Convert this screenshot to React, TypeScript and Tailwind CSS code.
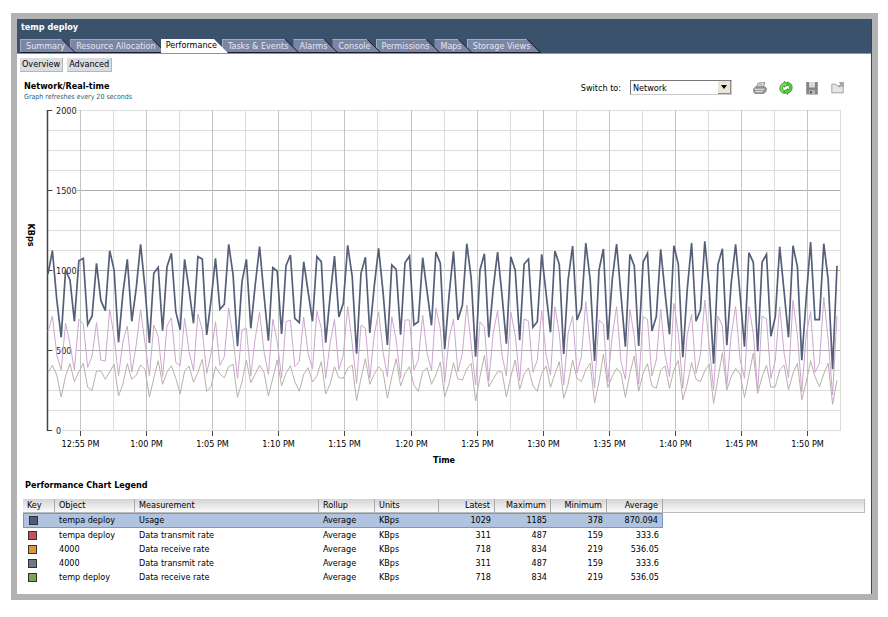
import type { ReactNode } from 'react';
import clsx from 'clsx';

const TABS = [
  'Summary',
  'Resource Allocation',
  'Performance',
  'Tasks & Events',
  'Alarms',
  'Console',
  'Permissions',
  'Maps',
  'Storage Views',
];

const TIMES = [
  '12:55 PM', '1:00 PM', '1:05 PM', '1:10 PM', '1:15 PM', '1:20 PM',
  '1:25 PM', '1:30 PM', '1:35 PM', '1:40 PM', '1:45 PM', '1:50 PM',
];

type Row = {
  color: string;
  object: string;
  measurement: string;
  values: [string, string, string, string];
};

const ROWS: Row[] = [
  { color: 'bg-[#535b7c]', object: 'tempa deploy', measurement: 'Usage', values: ['1029', '1185', '378', '870.094'] },
  { color: 'bg-[#c9505c]', object: 'tempa deploy', measurement: 'Data transmit rate', values: ['311', '487', '159', '333.6'] },
  { color: 'bg-[#d9963f]', object: '4000', measurement: 'Data receive rate', values: ['718', '834', '219', '536.05'] },
  { color: 'bg-[#717a80]', object: '4000', measurement: 'Data transmit rate', values: ['311', '487', '159', '333.6'] },
  { color: 'bg-[#78a94b]', object: 'temp deploy', measurement: 'Data receive rate', values: ['718', '834', '219', '536.05'] },
];

// One sample every 20 seconds, as depth below the 1312 KBps level (480 steps = 1000 KBps).
const USAGE = [
  162, 92, 240, 352, 150, 180, 304, 122, 115, 314, 288, 130, 242, 272, 92, 150, 367, 220, 118, 304,
  205, 73, 205, 369, 160, 142, 332, 140, 100, 275, 329, 118, 210, 310, 110, 117, 345, 240, 115, 268,
  253, 73, 165, 379, 185, 118, 325, 195, 80, 225, 362, 143, 153, 342, 137, 105, 295, 308, 125, 215,
  304, 110, 125, 368, 230, 108, 291, 250, 76, 170, 401, 160, 112, 339, 200, 85, 215, 375, 135, 148,
  344, 128, 108, 315, 305, 113, 215, 316, 96, 130, 388, 225, 94, 300, 255, 71, 175, 410, 150, 101,
  352, 205, 96, 225, 371, 110, 150, 361, 132, 117, 322, 305, 103, 220, 337, 93, 133, 402, 180, 78,
  300, 265, 69, 180, 423, 150, 87, 359, 180, 72, 225, 380, 103, 138, 378, 126, 100, 333, 290, 88,
  220, 343, 77, 133, 412, 210, 69, 304, 270, 64, 205, 431, 133, 86, 376, 190, 73, 225, 380, 98,
  127, 394, 127, 103, 349, 290, 80, 215, 352, 77, 140, 421, 235, 66, 299, 299, 71, 180, 448, 137,
];

const RECEIVE = [
  335, 288, 405, 450, 310, 372, 450, 298, 312, 442, 408, 308, 421, 423, 268, 350, 468, 365, 318, 456,
  375, 269, 370, 467, 315, 350, 470, 318, 293, 427, 437, 295, 395, 452, 282, 330, 460, 400, 305, 436,
  410, 264, 355, 475, 330, 325, 467, 355, 277, 395, 463, 298, 365, 473, 305, 300, 440, 425, 291, 400,
  447, 274, 325, 475, 370, 298, 449, 405, 260, 370, 490, 315, 325, 475, 345, 275, 395, 470, 290, 360,
  475, 300, 300, 450, 420, 286, 400, 452, 264, 325, 487, 355, 297, 455, 400, 255, 375, 495, 305, 322,
  483, 340, 272, 405, 468, 276, 345, 482, 297, 303, 457, 420, 272, 405, 465, 260, 340, 495, 340, 288,
  458, 410, 245, 375, 503, 300, 312, 487, 350, 260, 425, 478, 268, 350, 493, 290, 298, 468, 420, 267,
  405, 470, 250, 340, 505, 345, 283, 460, 405, 240, 375, 510, 288, 318, 497, 345, 260, 420, 475, 260,
  340, 515, 288, 297, 475, 420, 260, 400, 473, 241, 345, 515, 345, 275, 457, 430, 232, 360, 525, 287,
];

const TRANSMIT = [
  458, 436, 465, 531, 468, 431, 485, 455, 430, 502, 511, 453, 453, 478, 456, 432, 528, 492, 431, 478,
  466, 435, 448, 531, 475, 422, 493, 457, 437, 475, 522, 453, 438, 487, 457, 418, 514, 500, 440, 462,
  473, 440, 433, 532, 485, 421, 488, 462, 436, 457, 528, 475, 420, 497, 460, 437, 485, 514, 463, 443,
  486, 468, 425, 522, 492, 440, 473, 475, 445, 435, 542, 475, 416, 493, 463, 440, 455, 535, 470, 416,
  498, 460, 440, 495, 514, 455, 443, 493, 465, 426, 531, 490, 428, 477, 480, 447, 430, 543, 470, 406,
  500, 478, 455, 456, 531, 470, 420, 508, 462, 444, 497, 514, 460, 438, 502, 462, 425, 535, 492, 421,
  475, 485, 450, 430, 549, 485, 402, 502, 470, 445, 460, 532, 460, 408, 514, 460, 431, 498, 505, 450,
  438, 505, 450, 421, 539, 492, 428, 477, 485, 452, 433, 550, 475, 398, 510, 470, 445, 462, 532, 465,
  400, 520, 470, 436, 502, 500, 450, 435, 509, 460, 430, 539, 487, 422, 470, 500, 462, 430, 553, 481,
];

const TOP = 8;
const BOTTOM = 328;
const LEFT = 30;
const RIGHT = 824;

const toPoints = (samples: number[]) =>
  samples.map((s, i) => `${(31 + i * 4.408).toFixed(1)},${(118 + s / 3).toFixed(1)}`).join(' ');

const tickX = (i: number) => Math.round(64 + i * 66.1) - 0.5;

function Chart() {
  return (
    <svg viewBox="0 0 854 366" className="block h-auto w-full" role="img" aria-label="Network usage">
      {/* grid */}
      {Array.from({ length: 17 }, (_, i) => (
        <line
          key={i}
          x1={LEFT}
          x2={RIGHT}
          y1={TOP + i * 20 + 0.5}
          y2={TOP + i * 20 + 0.5}
          stroke={i % 4 === 0 && i > 0 && i < 16 ? '#adadad' : '#dcdcdc'}
        />
      ))}
      {TIMES.map((t, i) => (
        <g key={t}>
          <line x1={tickX(i)} x2={tickX(i)} y1={TOP} y2={BOTTOM} stroke="#c4c4c4" />
          <line x1={tickX(i + 0.5)} x2={tickX(i + 0.5)} y1={TOP} y2={BOTTOM} stroke="#dcdcdc" />
          <line x1={tickX(i)} x2={tickX(i)} y1={BOTTOM + 1} y2={BOTTOM + 6} stroke="#444" />
          <text x={tickX(i)} y={345} textAnchor="middle" fontSize="9">
            {t}
          </text>
        </g>
      ))}

      {/* value axis */}
      <line x1={LEFT + 0.5} x2={LEFT + 0.5} y1={TOP} y2={BOTTOM + 1} stroke="#444" strokeWidth="1.5" />
      {[2000, 1500, 1000, 500, 0].map((v, i) => (
        <g key={v}>
          <rect x={36} y={TOP + i * 80 - 4} width={v ? 24 : 9} height={9} fill="#fff" />
          <line x1={LEFT} x2={35} y1={TOP + i * 80 + 0.5} y2={TOP + i * 80 + 0.5} stroke="#444" />
          <text x={39} y={TOP + i * 80 + 4} fontSize="9" fill="#222">
            {v}
          </text>
        </g>
      ))}

      <g fill="none">
        <polyline points={toPoints(TRANSMIT)} stroke="#bab0aa" />
        <polyline points={toPoints(RECEIVE)} stroke="#cda6cf" />
        <polyline points={toPoints(USAGE)} stroke="#555f78" strokeWidth="1.7" />
      </g>

      <text transform="translate(11 133) rotate(90)" textAnchor="middle" fontSize="9" fontWeight="bold">
        KBps
      </text>
      <text x={427} y={361} textAnchor="middle" fontSize="9" fontWeight="bold">
        Time
      </text>
    </svg>
  );
}

function Tab({ label, order, active }: { label: string; order: number; active: boolean }) {
  return (
    <button
      type="button"
      role="tab"
      aria-selected={active}
      style={{ zIndex: active ? 20 : order }}
      className={clsx(
        'relative -ml-[6px] h-[14px] shrink-0 whitespace-nowrap first:ml-0 [clip-path:polygon(0_0,calc(100%-14px)_0,100%_100%,0_100%)]',
        active ? 'bg-white text-black' : 'bg-[#151b33] text-[#e4e7ef]',
      )}
    >
      <span
        className={clsx(
          'mr-[2px] mb-px block h-[13px] pr-[9px] pl-[5px] leading-[12px] [clip-path:polygon(0_0,calc(100%-13px)_0,100%_100%,0_100%)]',
          !active && 'border-t border-l border-[#a3abc2] bg-[#7b86a5]',
        )}
      >
        {label}
      </span>
    </button>
  );
}

function IconButton({ label, children }: { label: string; children: ReactNode }) {
  return (
    <button type="button" aria-label={label} className="size-[14px]">
      <svg viewBox="0 0 14 14" className="size-[14px]">
        {children}
      </svg>
    </button>
  );
}

function Toolbar() {
  return (
    <div className="flex items-center pr-[26px]">
      <label htmlFor="chart" className="mr-[9px]">
        Switch to:
      </label>
      <div className="relative mr-[21px]">
        <select
          id="chart"
          className="block h-[15px] w-[102px] appearance-none border border-t-[#777] border-r-[#ccc] border-b-[#ccc] border-l-[#777] bg-white pl-[2px] leading-[12px]"
        >
          <option>Network</option>
        </select>
        <span className="pointer-events-none absolute inset-y-px right-px flex w-[13px] items-center justify-center border-r border-b border-[#8d8a80] bg-[#e9e6d8]">
          <svg viewBox="0 0 6 4" className="h-1 w-[6px]">
            <path d="M0 0h6L3 4z" />
          </svg>
        </span>
      </div>
      <div className="flex gap-3">
        <IconButton label="Print">
          <path d="M5 2.2 11.8 1.6 10.2 6 3.4 6.6z" fill="#f2f2f2" stroke="#8b8b8b" />
          <path d="M5.8 3.7l4-.4M5.2 5.2l4-.4" stroke="#999" strokeWidth=".7" />
          <path d="M.8 7.5 3 5.8h8.6l1.8 1.2-.4 3.4-2.3 2H2L.6 11z" fill="#9a9a9a" stroke="#757575" strokeWidth=".8" />
          <path d="M1.5 8.3h9.8M2.4 10.6h7.2" stroke="#e6e6e6" />
        </IconButton>
        <IconButton label="Refresh">
          <path d="M5.8 12.6C2.4 12.3.5 9.6.9 6.6 1.2 4 3 2.2 5.2 1.9V.4l4.2 2.9-4.2 2.9V4.7C3.8 5.2 3.3 6.7 3.7 8c.3 1 1.1 1.8 2.1 2z" fill="#7ddc55" stroke="#2a8f20" strokeWidth=".8" />
          <path d="M8.2 1.2c3.4.3 5.3 3 4.9 6-.3 2.6-2.1 4.4-4.3 4.7v1.6l-4.2-2.9 4.2-2.9v1.5c1.4-.5 1.9-2 1.5-3.3-.3-1-1.1-1.8-2.1-2z" fill="#5cc93a" stroke="#2a8f20" strokeWidth=".8" />
        </IconButton>
        <IconButton label="Save">
          <path d="M1 1h12v12.5H2L1 12.5z" fill="#858585" />
          <path d="M4 1h6v5.5H4z" fill="#d8d8d8" />
          <path d="M4 9h6v4.5H4z" fill="#b5b5b5" />
          <path d="M5 10h2v2.5H5z" fill="#5f5f5f" />
          <path d="M1.5 1v12M12.5 1v12" stroke="#9e9e9e" />
        </IconButton>
        <IconButton label="Export">
          <path d="M.8 3.2h4l1 1.6h6.4v7H.8z" fill="#e6e6e6" stroke="#a2a2a2" />
          <path d="M8 1h5v5h-1.5L10.4 4.9 8.5 6.8 7.2 5.5 9.1 3.6z" fill="#a8a8a8" />
        </IconButton>
      </div>
    </div>
  );
}

function Legend() {
  const head = 'border-r border-[#aaa] font-normal text-left pl-1';
  const num = 'border-r border-[#aaa] font-normal text-right pr-1';
  return (
    <table className="w-full table-fixed border-separate border-spacing-0 leading-[13px]">
      <colgroup>
        <col className="w-8" />
        <col className="w-20" />
        <col className="w-[184px]" />
        <col className="w-14" />
        <col className="w-16" />
        <col className="w-14" />
        <col className="w-14" />
        <col className="w-14" />
        <col className="w-14" />
        <col />
      </colgroup>
      <thead>
        <tr className="h-[14px] *:border-b *:border-b-[#bbb] *:bg-linear-to-b *:from-[#d4d4d4] *:to-[#fafafa] *:p-0">
          <th className={head}>
            <span className="pl-1">Key</span>
          </th>
          {['Object', 'Measurement', 'Rollup', 'Units'].map((h) => (
            <th key={h} className={head}>
              <span className="pl-1">{h}</span>
            </th>
          ))}
          {['Latest', 'Maximum', 'Minimum', 'Average'].map((h) => (
            <th key={h} className={num}>
              <span className="pr-1">{h}</span>
            </th>
          ))}
          <td className="border-r border-[#bbb]" />
        </tr>
      </thead>
      <tbody>
        {ROWS.map((row, i) => {
          const cell = clsx('p-0', i === 0 && 'border-y border-[#6f9bc4] bg-[#b0c4e0]');
          return (
            <tr key={i} className={i === 0 ? 'h-[15px]' : 'h-[14px]'}>
              <td className={clsx(cell, i === 0 && 'border-l')}>
                <span className={clsx('ml-[5px] block size-[9px] border border-[#333]', row.color)} />
              </td>
              {[row.object, row.measurement, 'Average', 'KBps'].map((text, n) => (
                <td key={n} className={cell}>
                  <span className="pl-1">{text}</span>
                </td>
              ))}
              {row.values.map((v, n) => (
                <td key={n} className={clsx(cell, 'text-right', i === 0 && n === 3 && 'border-r')}>
                  <span className="pr-1">{v}</span>
                </td>
              ))}
              <td />
            </tr>
          );
        })}
      </tbody>
    </table>
  );
}

export default function App() {
  return (
    <div className="min-h-screen bg-white pt-[13px] pr-[10px] pb-4 pl-[11px] font-['DejaVu_Sans_Condensed','DejaVu_Sans',sans-serif] text-[9px] leading-[12px] text-black">
      <main className="border-[6px] border-[#b2b2b2]">
        <div className="border-r border-[#444] pb-[10px]">
          <header className="flex h-[35px] flex-col justify-between border-b border-[#8a94a5] bg-[#3b526c] pl-[3px]">
            <h1 className="pt-[2px] pl-px text-[9px] font-bold text-white">temp deploy</h1>
            <div role="tablist" className="isolate flex">
              {TABS.map((t, i) => (
                <Tab key={t} label={t} order={TABS.length - i} active={t === 'Performance'} />
              ))}
            </div>
          </header>

          <nav className="flex gap-1 px-[3px] pt-1">
            {['Overview', 'Advanced'].map((t) => (
              <button
                key={t}
                type="button"
                className="h-[14px] border-r border-b border-[#b5b5b5] bg-[#d9dce1] px-[2px] leading-[13px]"
              >
                {t}
              </button>
            ))}
          </nav>

          <section className="flex items-start justify-between pt-2 pl-[7px]">
            <div>
              <h2 className="leading-[13px] font-bold">Network/Real-time</h2>
              <p className="text-[7px] leading-[9px] text-[#1f5f7c]">Graph refreshes every 20 seconds</p>
            </div>
            <Toolbar />
          </section>

          <Chart />

          <section className="px-[6px] pt-[11px]">
            <h2 className="mb-2 pl-[2px] font-bold">Performance Chart Legend</h2>
            <Legend />
          </section>
        </div>
      </main>
    </div>
  );
}
